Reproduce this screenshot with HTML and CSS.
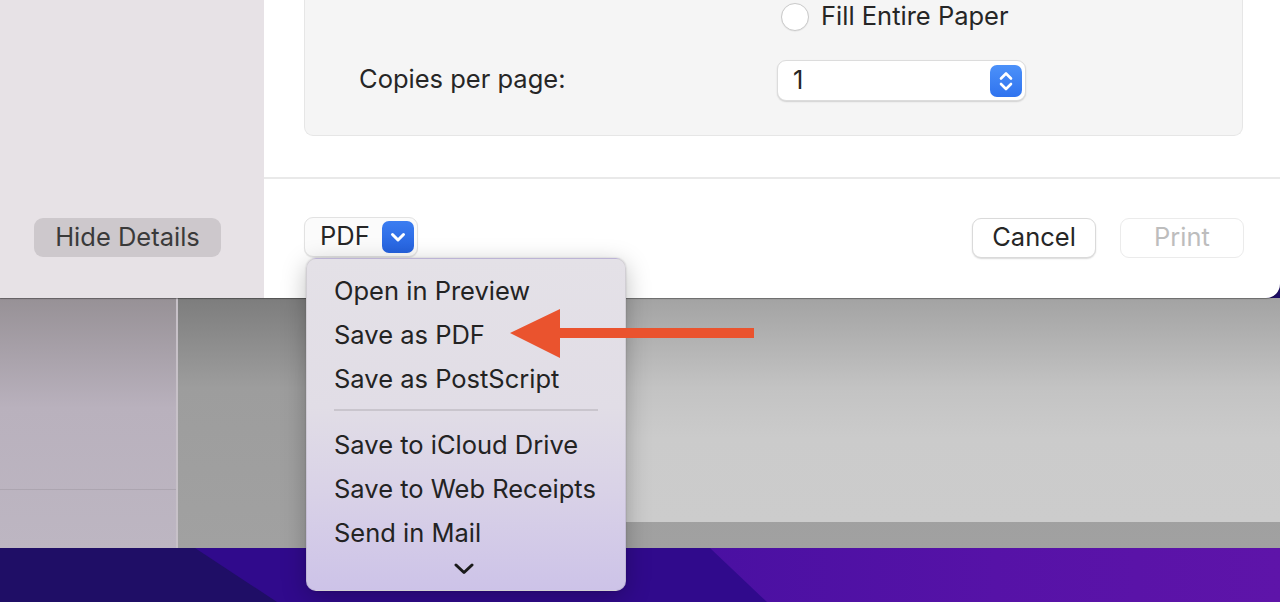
FILE: index.html
```html
<!DOCTYPE html>
<html lang="en">
<head>
<meta charset="utf-8">
<title>Print</title>
<link rel="stylesheet" href="styles.css">
</head>
<body>
<div class="screen">
  <div class="dialog">
    <aside class="sidebar">
      <button class="btn-hide">Hide Details</button>
    </aside>
    <section class="main">
      <div class="options">
        <div class="cell"></div>
        <label class="radio-row"><span class="radio"></span><span class="txt">Fill Entire Paper</span></label>
        <div class="label"><span class="txt">Copies per page:</span></div>
        <div class="stepper">
          <span class="value txt">1</span>
          <span class="stepper-btn">
            <svg width="32" height="32" viewBox="0 0 32 32"><path d="M11 13.5 L16 8.5 L21 13.5" fill="none" stroke="#fff" stroke-width="2.6" stroke-linecap="round" stroke-linejoin="round"/><path d="M11 19 L16 24 L21 19" fill="none" stroke="#fff" stroke-width="2.6" stroke-linecap="round" stroke-linejoin="round"/></svg>
          </span>
        </div>
      </div>
      <div class="footer">
        <button class="btn-pdf"><span class="txt">PDF</span><span class="pdf-arrow"><svg width="32" height="32" viewBox="0 0 32 32"><path d="M10.5 13.5 L16 19 L21.5 13.5" fill="none" stroke="#fff" stroke-width="3" stroke-linecap="round" stroke-linejoin="round"/></svg></span></button>
        <div class="spacer"></div>
        <button class="btn">Cancel</button>
        <button class="btn disabled">Print</button>
      </div>
    </section>
  </div>
  <div class="desktop">
    <div class="window">
      <div class="pane-left">
        <div class="pane-left-top"></div>
        <div class="pane-left-bottom"></div>
      </div>
      <div class="pane-right">
        <div class="page"></div>
      </div>
    </div>
    <div class="wallpaper">
      <svg width="1280" height="54" viewBox="0 0 1280 54">
        <defs>
          <linearGradient id="wpR" x1="0" y1="0" x2="1" y2="0">
            <stop offset="0" stop-color="#4a10a2"/>
            <stop offset="0.5" stop-color="#5612a7"/>
            <stop offset="1" stop-color="#5e14a9"/>
          </linearGradient>
        </defs>
        <rect width="1280" height="54" fill="#1f0e66"/>
        <polygon points="195,0 1280,0 1280,54 277,54" fill="#300a8c"/>
        <polygon points="710,0 1280,0 1280,54 767,54" fill="url(#wpR)"/>
      </svg>
    </div>
  </div>

  <div class="menu">
    <div class="item">Open in Preview</div>
    <div class="item">Save as PDF</div>
    <div class="item">Save as PostScript</div>
    <div class="sep"></div>
    <div class="item">Save to iCloud Drive</div>
    <div class="item">Save to Web Receipts</div>
    <div class="item">Send in Mail</div>
    <div class="more"><svg width="20" height="14" viewBox="0 0 20 14"><path d="M2 3 L10 10.5 L18 3" fill="none" stroke="#1a1a1a" stroke-width="3" stroke-linecap="round" stroke-linejoin="round"/></svg></div>
  </div>

  <svg class="arrow" width="252" height="56" viewBox="0 0 252 56"><path d="M5 28 L55 4 L55 23 L249 23 L249 33 L55 33 L55 53 Z" fill="#ea532e"/></svg>
</div>
</body>
</html>
```
FILE: styles.css
```css
* { box-sizing: border-box; }
html, body { margin: 0; padding: 0; }
body {
  width: 1280px;
  height: 602px;
  overflow: hidden;
  font-family: Inter, "Noto Sans", "Liberation Sans", sans-serif;
  color: #262626;
  background: #1e0e66;
}
.screen {
  position: relative;
  width: 1280px;
  height: 602px;
  overflow: hidden;
}
button { font-family: inherit; }
.txt { padding-bottom: 3px; }

/* dialog */
.dialog {
  display: flex;
  height: 298px;
  position: relative;
  z-index: 2;
  box-shadow: 0 1px 1px rgba(0,0,0,0.35);
  border-bottom-right-radius: 14px;
}
.sidebar {
  width: 264px;
  background: #e7e2e6;
  display: flex;
  flex-direction: column;
  justify-content: flex-end;
  align-items: flex-start;
  padding: 0 0 41px 34px;
}
.btn-hide {
  width: 187px;
  height: 39px;
  border: none;
  border-radius: 9px;
  background: #cdc8cc;
  color: #3a3a3a;
  font-size: 25.5px;
  padding: 0 0 3px 0;
}
.main {
  flex: 1;
  background: #fff;
  border-bottom-right-radius: 14px;
  display: flex;
  flex-direction: column;
}
.options {
  margin: 0 37px 0 40px;
  height: 136px;
  background: #f5f5f5;
  border: 1px solid #e6e6e6;
  border-top: none;
  border-radius: 0 0 9px 9px;
  display: grid;
  grid-template-columns: 418px 249px;
  grid-template-rows: 34px 40px;
  row-gap: 26px;
  align-content: start;
  padding-left: 54px;
}
.radio-row {
  display: flex;
  align-items: center;
  gap: 12px;
  padding-left: 4px;
  font-size: 25.5px;
}
.radio {
  width: 28px;
  height: 28px;
  border-radius: 50%;
  background: #fff;
  border: 1px solid #cacaca;
  box-shadow: 0 0.5px 1px rgba(0,0,0,0.08);
}
.label {
  display: flex;
  align-items: center;
  font-size: 25.5px;
}
.stepper {
  width: 249px;
  height: 41px;
  background: #fff;
  border: 1px solid #dcdcdc;
  border-radius: 9px;
  box-shadow: 0 1px 1.5px rgba(0,0,0,0.15);
  display: flex;
  align-items: center;
  justify-content: space-between;
  padding: 0 3px 0 15px;
  font-size: 25.5px;
}
.stepper-btn {
  width: 32px;
  height: 32px;
  border-radius: 7px;
  background: linear-gradient(#4c91f9, #2f73ef);
  display: block;
}
.stepper-btn svg { display: block; }

.footer {
  margin-top: 41px;
  border-top: 2px solid #e9e9e9;
  flex: 1;
  display: flex;
  align-items: flex-start;
  padding: 38px 36px 0 40px;
  gap: 24px;
}
.spacer { flex: 1; }
.btn-pdf {
  width: 114px;
  height: 40px;
  background: #fbfbfb;
  border: 1px solid #e2e2e2;
  border-radius: 9px;
  box-shadow: 0 1px 1px rgba(0,0,0,0.08);
  display: flex;
  align-items: center;
  justify-content: space-between;
  padding: 0 3px 0 15px;
  font-size: 25.5px;
  color: #262626;
}
.pdf-arrow {
  width: 32px;
  height: 32px;
  border-radius: 7px;
  background: linear-gradient(#3b7df1, #2461de);
  display: block;
}
.pdf-arrow svg { display: block; }
.btn {
  width: 124px;
  height: 40px;
  background: #fff;
  border: 1px solid #dadada;
  border-radius: 9px;
  box-shadow: 0 1px 1.5px rgba(0,0,0,0.15);
  font-size: 25.5px;
  color: #262626;
  padding: 0 0 3px 0;
  margin-top: 1px;
}
.btn.disabled {
  color: #bdbdbd;
  border-color: #ebebeb;
  box-shadow: none;
}

/* desktop behind */
.desktop {
  height: 304px;
  display: flex;
  flex-direction: column;
}
.window {
  height: 250px;
  display: flex;
}
.pane-left {
  width: 178px;
  border-right: 2px solid #c7c1c8;
  display: flex;
  flex-direction: column;
  background: linear-gradient(#979196 0, #b9b1bd 110px, #bdb6c2 100%);
}
.pane-left-top {
  height: 192px;
  border-bottom: 1px solid #aca5b0;
}
.pane-left-bottom { flex: 1; }
.pane-right {
  flex: 1;
  background: linear-gradient(#7d7d7d 0, #9d9d9d 90px, #a1a1a1 100%);
  padding-left: 130px;
}
.page {
  height: 224px;
  background: linear-gradient(#a3a3a3 0, #c3c3c3 90px, #cbcbcb 140px, #cccccc 100%);
}
.wallpaper {
  flex: 1;
  overflow: hidden;
}
.wallpaper svg { display: block; }

/* menu overlay */
.menu {
  position: absolute;
  left: 306px;
  top: 258px;
  width: 320px;
  height: 333px;
  z-index: 5;
  border-radius: 10px;
  border: 1px solid rgba(0,0,0,0.08);
  background: linear-gradient(#e4e1e7 0, #e1dde6 45%, #d9d2e7 70%, #cdc3e8 100%);
  box-shadow: 0 6px 24px rgba(0,0,0,0.25), 0 0 2px rgba(0,0,0,0.2);
  padding: 10px 0 0 0;
}
.item {
  height: 44px;
  line-height: 44px;
  padding-left: 27px;
  font-size: 25.5px;
  color: #232323;
  white-space: nowrap;
}
.sep {
  height: 2px;
  background: #c9c5cd;
  margin: 8px 27px 12px 27px;
}
.more {
  height: 28px;
  display: flex;
  justify-content: center;
  align-items: center;
  padding-right: 4px;
}
.more svg { display: block; }

.arrow {
  position: absolute;
  left: 505px;
  top: 305px;
  z-index: 6;
}
```
